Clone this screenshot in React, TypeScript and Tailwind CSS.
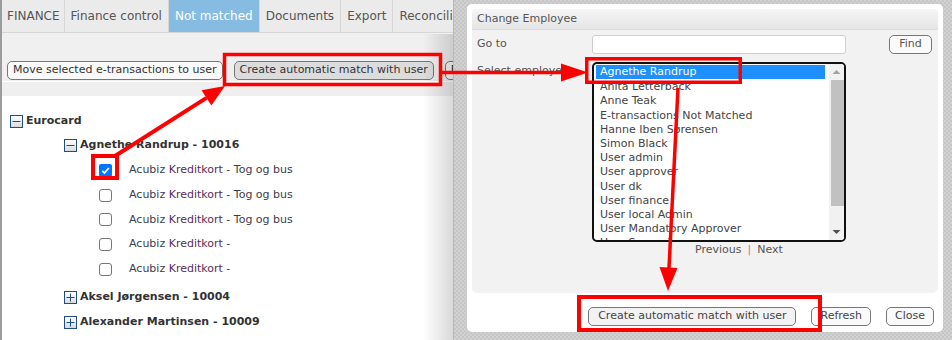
import React from "react";

const tabs = ["FINANCE", "Finance control", "Not matched", "Documents", "Export", "Reconciliation"];

const employees = [
  "Agnethe Randrup",
  "Anita Letterback",
  "Anne Teak",
  "E-transactions Not Matched",
  "Hanne Iben Sørensen",
  "Simon Black",
  "User admin",
  "User approver",
  "User dk",
  "User finance",
  "User local Admin",
  "User Mandatory Approver",
  "User Supervisor",
];

const cards = [
  { checked: true, text: "Tog og bus" },
  { checked: false, text: "Tog og bus" },
  { checked: false, text: "Tog og bus" },
  { checked: false, text: "" },
  { checked: false, text: "" },
];

const Expander = ({ open }: { open: boolean }) => (
  <span className="w-[13px] h-[13px] shrink-0 border border-[#1f4e86] bg-gradient-to-b from-white to-[#dadada] flex items-center justify-center">
    <svg width="11" height="11" viewBox="0 0 11 11">
      <path d="M1.5 5.5h8" stroke="#1f4e86" strokeWidth="1" />
      {!open && <path d="M5.5 1.5v8" stroke="#1f4e86" strokeWidth="1" />}
    </svg>
  </span>
);

const Checkbox = ({ checked }: { checked: boolean }) =>
  checked ? (
    <span className="w-[13px] h-[13px] shrink-0 rounded-[2px] bg-[#0075ff] flex items-center justify-center">
      <svg width="11" height="11" viewBox="0 0 11 11">
        <path d="M2.3 5.8l2.2 2.2 4.3-5" stroke="white" strokeWidth="1.8" fill="none" />
      </svg>
    </span>
  ) : (
    <span className="w-[13px] h-[13px] shrink-0 rounded-[3px] border border-[#767676] bg-white" />
  );

export default function App() {
  return (
    <div className="relative w-[952px] h-[340px] overflow-hidden flex bg-[image:repeating-conic-gradient(#c6c6c6_0%_25%,#d1d1d1_0%_50%)] bg-[length:4px_4px] font-['DejaVu_Sans',sans-serif] text-[11px]">
      {/* page behind the dialog */}
      <div className="relative w-[454px] h-full shrink-0 bg-white border-l-2 border-[#9c9c9c] border-r border-r-[#b8b8b8] overflow-hidden">
        <div className="flex h-[33px] bg-[#ebebeb] border-b border-[#d6d6d6] text-[12px] text-[#555] whitespace-nowrap">
          {tabs.map((t, i) => (
            <div
              key={t}
              className={`flex items-center h-full border-r border-[#d6d6d6] ${i === 0 ? "pl-[5px] pr-[4px]" : "px-[6px]"} ${
                t === "Not matched" ? "bg-[#86bce2] text-white" : ""
              }`}
            >
              {t}
            </div>
          ))}
        </div>
        <div className="h-[49px] bg-[#f0f0f0] border-b border-white flex items-end pb-[1px] pl-[5px] gap-[11px] whitespace-nowrap text-[#333]">
          <button className="h-[19px] px-[5px] border border-[#777] rounded-[5px] bg-[#fafafa]">Move selected e-transactions to user</button>
          <button className="h-[19px] px-[5px] border border-[#777] rounded-[5px] bg-[#dcdcdc]">Create automatic match with user</button>
          <button className="h-[19px] px-[5px] border border-[#777] rounded-[5px] bg-[#fafafa]">Find</button>
        </div>
        <div className="h-[14px] bg-[#efefef]" />
        <div className="pt-[13px] flex flex-col text-[#333]">
          <div className="flex items-center h-[24px] pl-[8px] gap-[3px]">
            <Expander open />
            <span className="font-bold">Eurocard</span>
          </div>
          <div className="flex items-center h-[25px] pl-[62px] gap-[3px]">
            <Expander open />
            <span className="font-bold">Agnethe Randrup - 10016</span>
          </div>
          {cards.map((c, i) => (
            <div key={i} className="flex items-center h-[24.75px] pl-[97px] gap-[17px]">
              <Checkbox checked={c.checked} />
              <span className="text-[#3d3d4a]">
                Acubiz <span className="text-[#5b2c56]">Kreditkort</span> -{c.text ? " " + c.text : ""}
              </span>
            </div>
          ))}
          <div className="flex items-center h-[25px] mt-[3px] pl-[62px] gap-[3px]">
            <Expander open={false} />
            <span className="font-bold">Aksel Jørgensen - 10004</span>
          </div>
          <div className="flex items-center h-[25px] pl-[62px] gap-[3px]">
            <Expander open={false} />
            <span className="font-bold">Alexander Martinsen - 10009</span>
          </div>
          <div className="flex items-center h-[24px] pl-[62px] gap-[3px]">
            <Expander open={false} />
            <span className="font-bold">Allan Hansen - 10001</span>
          </div>
        </div>
        <div className="absolute top-[34px] right-0 w-[30px] h-[306px] bg-gradient-to-r from-transparent to-black/15" />
      </div>

      {/* dialog */}
      <div className="ml-[13px] mt-[4px] w-[476px] h-[328px] shrink-0 bg-white rounded-[5px] p-[5px] flex flex-col text-[#555]">
        <div className="h-[21px] shrink-0 rounded-t-[4px] bg-gradient-to-b from-[#f6f6f6] to-[#e5e5e5] border-b border-[#dcdcdc] flex items-center pl-[5px] pt-[1px]">
          Change Employee
        </div>
        <div className="h-[263px] shrink-0 bg-[#f2f2f2] rounded-b-[5px] pl-[5px] pt-[5px] flex flex-col">
          <div className="flex items-center h-[19px]">
            <span className="w-[115px]">Go to</span>
            <div className="w-[254px] h-[19px] bg-white border border-[#cfcfcf] rounded-[3px]" />
            <button className="ml-auto mr-[6px] h-[19px] w-[43px] border border-[#777] rounded-[5px] bg-[#fafafa] text-[#555]">Find</button>
          </div>
          <div className="flex items-start mt-[8px]">
            <span className="w-[115px] pt-[1px]">Select employee</span>
            <div className="w-[254px] h-[180px] border-2 border-[#111] rounded-[5px] bg-white flex overflow-hidden">
              <div className="flex-1 pt-[1px] pl-[2px] pr-[4px] overflow-hidden text-[#444]">
                {employees.map((e, i) => (
                  <div
                    key={e}
                    className={`h-[14.2px] leading-[14.2px] pl-[4px] whitespace-nowrap ${i === 0 ? "bg-[#1e90ff] text-white" : "translate-y-[1px]"}`}
                  >
                    {e}
                  </div>
                ))}
              </div>
              <div className="w-[15px] h-full bg-[#f1f1f1] flex flex-col items-center">
                <svg width="15" height="16" viewBox="0 0 15 16">
                  <path d="M3.5 10h8l-4-4z" fill="#a3a3a3" />
                </svg>
                <div className="w-[13px] ml-[2px] h-[126px] bg-[#c1c1c1]" />
                <div className="flex-1" />
                <svg width="15" height="16" viewBox="0 0 15 16">
                  <path d="M3.5 6h8l-4 4z" fill="#505050" />
                </svg>
              </div>
            </div>
          </div>
          <div className="flex items-center gap-[6px] ml-[218px] mt-[1px] h-[14px]">
            <span>Previous</span>
            <span className="text-[#e0707a]">|</span>
            <span>Next</span>
          </div>
        </div>
        <div className="flex justify-end gap-[15px] pt-[14px] pr-[4px] text-[#444]">
          <button className="h-[19px] px-[9px] border border-[#777] rounded-[5px] bg-[#f2f2f2]">Create automatic match with user</button>
          <button className="h-[19px] px-[8px] border border-[#777] rounded-[5px] bg-[#fafafa]">Refresh</button>
          <button className="h-[19px] px-[8px] border border-[#777] rounded-[5px] bg-[#fafafa]">Close</button>
        </div>
      </div>

      {/* red annotations */}
      <svg className="absolute inset-0 pointer-events-none" width="952" height="340" viewBox="0 0 952 340">
        <g fill="none" stroke="#ff0000">
          <rect x="224.5" y="54.5" width="216" height="30" strokeWidth="3.5" />
          <rect x="93" y="156" width="24" height="22" strokeWidth="4" />
          <rect x="586.75" y="58.75" width="153.5" height="23.5" strokeWidth="3.5" />
          <rect x="579" y="297" width="241" height="33" strokeWidth="4" />
          <path d="M115 156L206.5 97.9" strokeWidth="4" />
          <path d="M441 72.5H563" strokeWidth="3.5" />
          <path d="M678 88L669 268" strokeWidth="3.5" />
        </g>
        <g fill="#ff0000">
          <polygon points="225,86 211.4,105.5 201.6,90.3" />
          <polygon points="588,72.5 561,63.5 561,81.5" />
          <polygon points="668,291 659.5,267 677.5,268" />
        </g>
      </svg>
    </div>
  );
}
